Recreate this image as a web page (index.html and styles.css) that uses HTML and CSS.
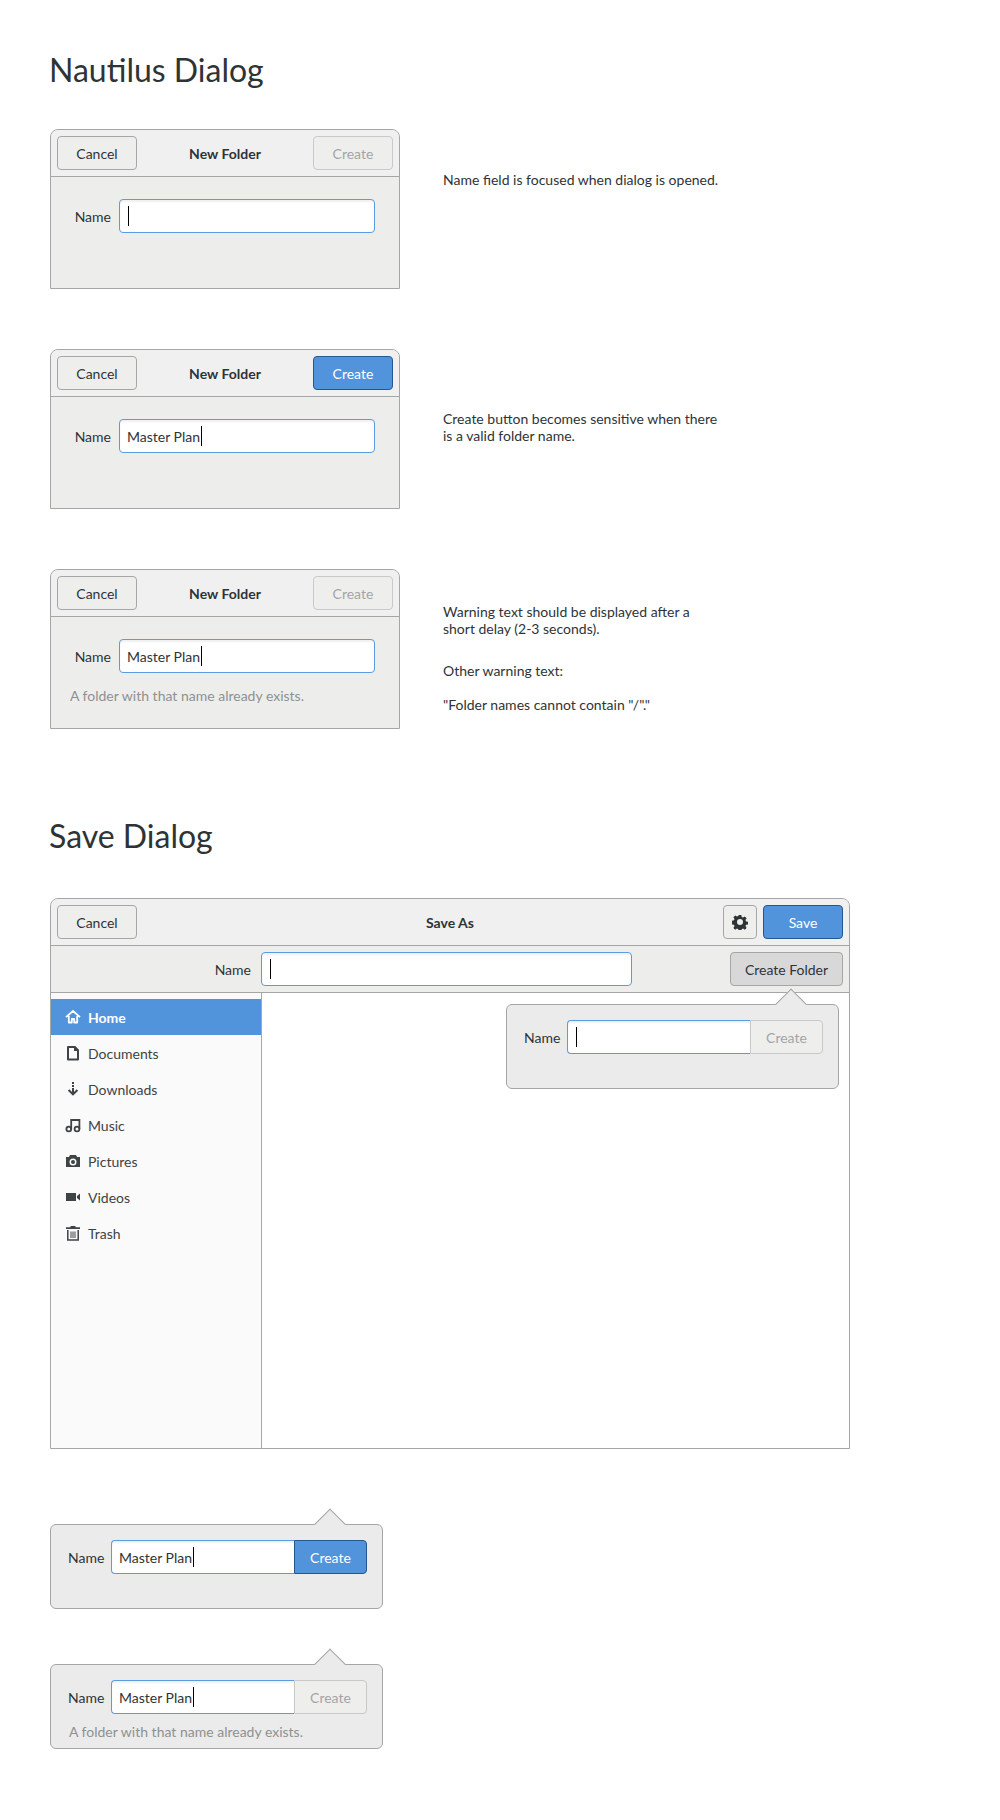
FILE: index.html
```html
<!DOCTYPE html>
<html lang="en">
<head>
<meta charset="UTF-8">
<meta name="viewport" content="width=device-width, initial-scale=1.0">
<title>Nautilus Dialog</title>
<link rel="stylesheet" href="styles.css">
</head>
<body>

<h1 class="page-title">Nautilus Dialog</h1>

<section class="mock-row">
    <div class="dialog">
        <header class="titlebar">
            <button class="btn">Cancel</button>
            <span class="titlebar-title">New Folder</span>
            <button class="btn btn-disabled">Create</button>
        </header>
        <div class="dialog-body">
            <div class="name-row">
                <label class="name-label">Name</label>
                <div class="field field-grow"><span class="caret"></span></div>
            </div>
        </div>
    </div>
    <div class="note note-first">
        <p>Name field is focused when dialog is opened.</p>
    </div>
</section>

<section class="mock-row">
    <div class="dialog">
        <header class="titlebar">
            <button class="btn">Cancel</button>
            <span class="titlebar-title">New Folder</span>
            <button class="btn btn-primary">Create</button>
        </header>
        <div class="dialog-body">
            <div class="name-row">
                <label class="name-label">Name</label>
                <div class="field field-grow">Master Plan<span class="caret"></span></div>
            </div>
        </div>
    </div>
    <div class="note note-second">
        <p>Create button becomes sensitive when there<br>is a valid folder name.</p>
    </div>
</section>

<section class="mock-row">
    <div class="dialog">
        <header class="titlebar">
            <button class="btn">Cancel</button>
            <span class="titlebar-title">New Folder</span>
            <button class="btn btn-disabled">Create</button>
        </header>
        <div class="dialog-body">
            <div class="name-row">
                <label class="name-label">Name</label>
                <div class="field field-grow">Master Plan<span class="caret"></span></div>
            </div>
            <p class="warning warning-dialog">A folder with that name already exists.</p>
        </div>
    </div>
    <div class="note note-third">
        <p>Warning text should be displayed after a<br>short delay (2-3 seconds).</p>
        <p>Other warning text:</p>
        <p>"Folder names cannot contain "/"."</p>
    </div>
</section>

<h1 class="page-title save-title">Save Dialog</h1>

<div class="dialog save-dialog">
    <header class="titlebar">
        <button class="btn">Cancel</button>
        <span class="titlebar-title">Save As</span>
        <div class="titlebar-end">
            <button class="btn btn-icon">
                <svg class="gear" viewBox="0 0 16 16" width="16" height="16">
                    <path fill="#2e3436" fill-rule="evenodd" d="M6.7 1h2.6l.4 2 1.3.6 1.8-1.1 1.8 1.8-1.1 1.8.6 1.3 2 .4v2.6l-2 .4-.6 1.3 1.1 1.8-1.8 1.8-1.8-1.1-1.3.6-.4 2H6.7l-.4-2-1.3-.6-1.8 1.1-1.8-1.8 1.1-1.8-.6-1.3-2-.4V6.700l2-.4.6-1.3-1.100-1.800 1.800-1.800 1.800 1.100 1.300-.6zM8 5a3 3 0 1 0 0 6 3 3 0 0 0 0-6z"/>
                </svg>
            </button>
            <button class="btn btn-primary">Save</button>
        </div>
    </header>
    <div class="save-name">
        <label class="save-name-label">Name</label>
        <div class="field save-field"><span class="caret"></span></div>
        <button class="btn btn-pressed">Create Folder</button>
    </div>
    <div class="save-main">
        <nav class="sidebar">
            <a class="place place-active">
                <svg class="place-icon" viewBox="0 0 16 16"><path fill="none" stroke="currentColor" stroke-width="1.8" stroke-linejoin="round" d="M1 8.200 8 2l7 6.200M3.800 7v6.500h3V10h2.400v3.500h3V7"/></svg>
                Home
            </a>
            <a class="place">
                <svg class="place-icon" viewBox="0 0 16 16"><path fill="none" stroke="currentColor" stroke-width="2" stroke-linejoin="round" d="M3 2h6.500L13 5.500V14.500H3z"/><path fill="currentColor" d="M9 1h1l4 4v1H9z"/></svg>
                Documents
            </a>
            <a class="place">
                <svg class="place-icon" viewBox="0 0 16 16"><path fill="currentColor" d="M7 1h2v2H7zm0 3h2v2H7zm0 3h2v4l2.700-2.700 1.400 1.400L8 14.800 2.900 9.700l1.400-1.400L7 11z"/></svg>
                Downloads
            </a>
            <a class="place">
                <svg class="place-icon" viewBox="0 0 16 16"><g fill="none" stroke="currentColor" stroke-width="1.800"><circle cx="3.800" cy="12" r="2.400"/><circle cx="12" cy="12" r="2.400"/><path d="M6.200 12V3h8.200v9"/></g></svg>
                Music
            </a>
            <a class="place">
                <svg class="place-icon" viewBox="0 0 16 16"><path fill="currentColor" fill-rule="evenodd" d="M5 2h6l1 2h3v10H1V4h3zm3 3.500a3.500 3.500 0 1 0 0 7 3.500 3.500 0 0 0 0-7zM8 7a2 2 0 1 1 0 4 2 2 0 0 1 0-4z"/></svg>
                Pictures
            </a>
            <a class="place">
                <svg class="place-icon" viewBox="0 0 16 16"><path fill="currentColor" d="M1 4h10v8H1zm11 3 3-2.500v7L12 9z"/></svg>
                Videos
            </a>
            <a class="place">
                <svg class="place-icon" viewBox="0 0 16 16"><path fill="currentColor" d="M5.500 1h5v1.300H15v1.700H1V2.300h4.500z"/><path fill="none" stroke="currentColor" stroke-width="1.500" d="M2.800 5v10h10.400V5"/><path fill="currentColor" d="M5.500 6.500h1v6.500h-1zm2 0h1v6.500h-1zm2 0h1v6.500h-1z"/></svg>
                Trash
            </a>
        </nav>
        <div class="file-pane">
            <div class="popover popover-open">
                <span class="popover-arrow"></span>
                <div class="name-row">
                    <label class="name-label">Name</label>
                    <div class="field field-linked"><span class="caret"></span></div>
                    <button class="btn btn-disabled btn-linked">Create</button>
                </div>
            </div>
        </div>
    </div>
</div>

<div class="popover popover-first">
    <span class="popover-arrow"></span>
    <div class="name-row">
        <label class="name-label">Name</label>
        <div class="field field-linked">Master Plan<span class="caret"></span></div>
        <button class="btn btn-primary btn-linked">Create</button>
    </div>
</div>

<div class="popover popover-second">
    <span class="popover-arrow"></span>
    <div class="name-row">
        <label class="name-label">Name</label>
        <div class="field field-linked">Master Plan<span class="caret"></span></div>
        <button class="btn btn-disabled btn-linked">Create</button>
    </div>
    <p class="warning warning-popover">A folder with that name already exists.</p>
</div>

</body>
</html>
```

FILE: styles.css
```css
* {
    box-sizing: border-box;
}

body {
    font-family: "Lato", "Liberation Sans", sans-serif;
    font-size: 14px;
    color: #2e3436;
    background-color: #fff;
    margin: 0;
    padding: 50px 0 0 50px;
}

p {
    margin: 0;
}

.page-title {
    font-size: 32px;
    font-weight: 400;
    line-height: 40px;
    margin: 0 0 39px -1px;
}

.save-title {
    margin-top: 78px;
    margin-bottom: 42px;
}

.mock-row {
    display: flex;
    margin-bottom: 60px;
}

.dialog {
    width: 350px;
    height: 160px;
    background-color: #ededec;
    border: 1px solid #a6a6a6;
    border-radius: 8px 8px 0 0;
    display: flex;
    flex-direction: column;
    flex-shrink: 0;
}

.titlebar {
    height: 47px;
    flex-shrink: 0;
    padding: 6px;
    display: flex;
    justify-content: space-between;
    align-items: center;
    background-color: #f0f0f0;
    border-bottom: 1px solid #a6a6a6;
    border-radius: 7px 7px 0 0;
    position: relative;
}

.titlebar-title {
    font-weight: 700;
}

.titlebar-end {
    display: flex;
    gap: 6px;
}

.btn {
    width: 80px;
    height: 34px;
    padding: 0;
    font: inherit;
    color: #2e3436;
    background-color: #eeeeed;
    border: 1px solid #a6a6a6;
    border-radius: 4px;
}

.btn-disabled {
    color: #a3a5a5;
    background-color: #eeeeed;
    border-color: #c9c9c9;
}

.btn-primary {
    color: #fff;
    background-color: #5294dc;
    border-color: #24578f;
}

.btn-icon {
    width: 34px;
    display: flex;
    align-items: center;
    justify-content: center;
}

.btn-pressed {
    width: 113px;
    background-color: #d8d8d8;
}

.dialog-body {
    padding: 22px 24px 0 18px;
}

.name-row {
    display: flex;
    align-items: center;
}

.name-label {
    width: 35px;
    margin-right: 8px;
    flex-shrink: 0;
}

.dialog-body .name-label {
    width: 42px;
    margin-left: 0;
    margin-right: 8px;
    text-align: right;
}

.field {
    height: 34px;
    padding: 0 7px;
    display: flex;
    align-items: center;
    background-color: #fff;
    border: 1px solid #5b9bdf;
    border-radius: 4px;
    box-shadow: inset 0 2px 2px rgba(0, 0, 0, 0.06);
}

.field-grow {
    flex: 1;
}

.caret {
    width: 1px;
    height: 20px;
    background-color: #000;
    margin-left: 1px;
}

.warning {
    color: #8f9191;
}

.warning-dialog {
    margin: 14px 0 0 1px;
}

.warning-popover {
    margin: 9px 0 0 1px;
}

.note {
    margin-left: 43px;
    width: 300px;
    line-height: 17px;
}

.note-first {
    padding-top: 42px;
}

.note-second {
    padding-top: 61px;
}

.note-third {
    padding-top: 34px;
}

.note-third p {
    margin-bottom: 25px;
}

.note-third p:last-child {
    margin-top: -8px;
}

.save-dialog {
    width: 800px;
    height: 551px;
    margin-bottom: 75px;
}

.save-dialog .titlebar-title {
    position: absolute;
    left: 0;
    right: 0;
    text-align: center;
}

.save-name {
    height: 47px;
    flex-shrink: 0;
    padding: 0 6px 0 0;
    display: flex;
    align-items: center;
    border-bottom: 1px solid #a6a6a6;
}

.save-name-label {
    width: 200px;
    text-align: right;
    flex-shrink: 0;
}

.save-field {
    width: 371px;
    margin-left: 10px;
    margin-right: auto;
}

.save-main {
    flex: 1;
    display: flex;
    min-height: 0;
}

.sidebar {
    width: 211px;
    padding-top: 6px;
    background-color: #fafafa;
    border-right: 1px solid #a6a6a6;
}

.place {
    height: 36px;
    padding-left: 14px;
    display: flex;
    align-items: center;
    gap: 7px;
    color: #3e4345;
}

.place-active {
    color: #fff;
    font-weight: 700;
    background-color: #5294dc;
}

.place-icon {
    width: 16px;
    height: 16px;
    flex-shrink: 0;
}

.file-pane {
    flex: 1;
    position: relative;
    background-color: #fff;
}

.popover {
    width: 333px;
    height: 85px;
    padding: 15px 15px 0 17px;
    background-color: #ebebeb;
    border: 1px solid #a6a6a6;
    border-radius: 6px;
    position: relative;
}

.popover-open {
    position: absolute;
    top: 11px;
    left: 244px;
}

.popover-first {
    margin-bottom: 55px;
}

.popover-arrow {
    position: absolute;
    top: -12px;
    right: 41px;
    width: 22px;
    height: 22px;
    background-color: #ebebeb;
    border-top: 1px solid #a6a6a6;
    border-left: 1px solid #a6a6a6;
    transform: rotate(45deg);
}

.popover-open .popover-arrow {
    right: 36px;
}

.field-linked {
    width: 183px;
    border-right: none;
    border-radius: 4px 0 0 4px;
}

.btn-linked {
    width: 73px;
    border-radius: 0 4px 4px 0;
}
```
